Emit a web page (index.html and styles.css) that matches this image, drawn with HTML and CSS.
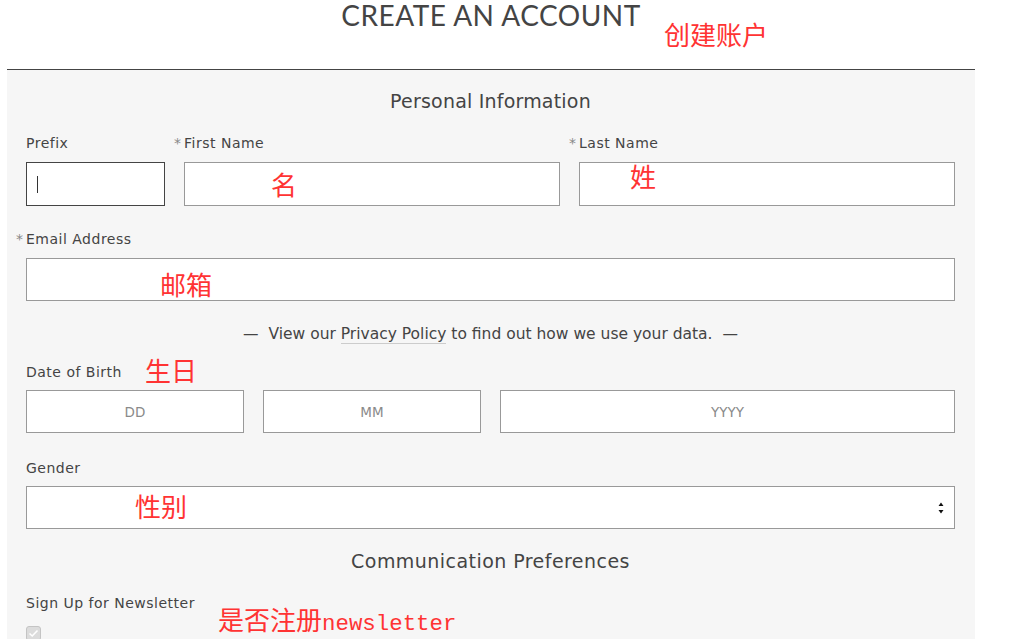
FILE: index.html
```html
<!DOCTYPE html>
<html lang="en">
<head>
<meta charset="utf-8">
<title>Create an Account</title>
<link rel="stylesheet" href="styles.css">
</head>
<body>
<div class="page">
  <header class="head">
    <h1 class="title">CREATE AN ACCOUNT</h1>
  </header>
  <form class="panel">
    <h2 class="section-title">Personal Information</h2>
    <div class="row row-name">
      <div class="field">
        <span class="label">Prefix</span>
        <div class="box box-focus"><span class="caret"></span></div>
      </div>
      <div class="field">
        <span class="label req">First Name</span>
        <div class="box"></div>
      </div>
      <div class="field">
        <span class="label req">Last Name</span>
        <div class="box"></div>
      </div>
    </div>
    <div class="field field-email">
      <span class="label req">Email Address</span>
      <div class="box box-43"></div>
    </div>
    <p class="privacy">—&nbsp; View our <a class="link">Privacy Policy</a> to find out how we use your data. &nbsp;—</p>
    <div class="field">
      <span class="label label-dob">Date of Birth</span>
      <div class="row row-dob">
        <div class="box box-43 ph">DD</div>
        <div class="box box-43 ph">MM</div>
        <div class="box box-43 ph">YYYY</div>
      </div>
    </div>
    <div class="field field-gender">
      <span class="label label-dob">Gender</span>
      <div class="box box-43 select">
        <svg class="arrows" width="6" height="12" viewBox="0 0 6 12"><path d="M3 0.5 L5.5 4 L0.5 4 Z M0.5 8 L5.5 8 L3 11.5 Z" fill="#111"/></svg>
      </div>
    </div>
    <h2 class="section-title section-comm">Communication Preferences</h2>
    <div class="field field-news">
      <span class="label">Sign Up for Newsletter</span>
      <span class="check"><svg width="11" height="9" viewBox="0 0 11 9"><path d="M1.5 4.5 L4.2 7 L9.5 1.5" fill="none" stroke="#fff" stroke-width="1.6"/></svg></span>
    </div>
  </form>
</div>
<div class="note n-title">创建账户</div>
<div class="note n-first">名</div>
<div class="note n-last">姓</div>
<div class="note n-email">邮箱</div>
<div class="note n-dob">生日</div>
<div class="note n-gender">性别</div>
<div class="note n-news">是否注册<span class="latin">newsletter</span></div>
</body>
</html>
```

FILE: styles.css
```css
html, body {
  margin: 0;
  padding: 0;
  background: #fff;
}
body {
  font-family: "DejaVu Sans", "Open Sans", sans-serif;
  color: #444;
  height: 639px;
  overflow: hidden;
  position: relative;
}
.page {
  width: 968px;
  margin-left: 7px;
}
.head {
  height: 69px;
  border-bottom: 1px solid #444;
  text-align: center;
}
.title {
  margin: 0;
  font-family: "Lato", sans-serif;
  font-weight: 400;
  font-size: 28px;
  line-height: 30px;
  letter-spacing: 0.5px;
  color: #444;
}
.panel {
  background: #f6f6f6;
  padding: 19px 20px 40px 19px;
  display: flex;
  flex-direction: column;
}
.section-title {
  margin: 0;
  text-align: center;
  font-weight: 400;
  font-size: 19px;
  line-height: 24px;
  letter-spacing: 0.2px;
  color: #444;
}
.section-comm {
  margin-top: 20px;
  letter-spacing: 0.45px;
}
.row {
  display: grid;
  gap: 19px;
}
.row-name {
  grid-template-columns: 139px 1fr 1fr;
  margin-top: 21px;
}
.row-dob {
  grid-template-columns: 218px 218px 1fr;
}
.field {
  display: flex;
  flex-direction: column;
}
.field-email {
  margin-top: 24px;
}
.field-gender {
  margin-top: 26px;
}
.field-news {
  margin-top: 21px;
}
.label {
  position: relative;
  font-size: 14px;
  line-height: 18px;
  letter-spacing: 0.5px;
  color: #444;
  margin-bottom: 10px;
}
.label-dob {
  margin-bottom: 9px;
}
.req::before {
  content: "*";
  position: absolute;
  left: -10px;
  top: 0;
  color: #888;
}
.box {
  height: 44px;
  box-sizing: border-box;
  background: #fff;
  border: 1px solid #999;
  position: relative;
}
.box-43 {
  height: 43px;
}
.box-focus {
  border-color: #444;
}
.caret {
  position: absolute;
  left: 10px;
  top: 13px;
  width: 1px;
  height: 17px;
  background: #333;
}
.ph {
  display: flex;
  align-items: center;
  justify-content: center;
  font-size: 13.5px;
  color: #8a8a8a;
}
.select .arrows {
  position: absolute;
  right: 10px;
  top: 15px;
}
.privacy {
  margin: 23px 0 19px;
  text-align: center;
  font-size: 15.5px;
  line-height: 20px;
  color: #444;
}
.link {
  border-bottom: 1px solid #ccc;
}
.check {
  margin-top: 4px;
  width: 15px;
  height: 15px;
  box-sizing: border-box;
  border: 1px solid #c4c4c4;
  border-radius: 3px;
  background: #dcdcdc;
  display: flex;
  align-items: center;
  justify-content: center;
}
.note {
  position: absolute;
  color: #f33;
  font-family: "Noto Sans CJK SC", sans-serif;
  font-size: 26px;
  line-height: 30px;
  white-space: nowrap;
}
.note .latin {
  font-family: "Liberation Mono", monospace;
  font-size: 22.4px;
}
.n-title { left: 664px; top: 19px; }
.n-first { left: 271px; top: 169px; }
.n-last { left: 630px; top: 161px; }
.n-email { left: 160px; top: 269px; }
.n-dob { left: 145px; top: 355px; }
.n-gender { left: 135px; top: 491px; }
.n-news { left: 218px; top: 604px; }
```
